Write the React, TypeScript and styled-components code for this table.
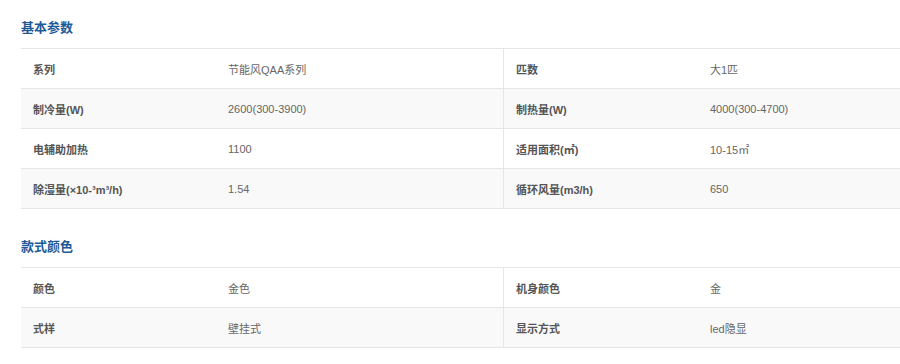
import React from 'react';
import styled, { createGlobalStyle } from 'styled-components';

const GlobalStyle = createGlobalStyle`
  body {
    margin: 0;
    background: #ffffff;
    font-family: Arial, "Liberation Sans", "Noto Sans CJK SC", sans-serif;
  }
`;

const Page = styled.div`
  padding: 8px 0 0 21px;
  display: flex;
  flex-direction: column;
  gap: 18px;
`;

const Section = styled.section`
  display: flex;
  flex-direction: column;
`;

const Title = styled.h3`
  margin: 0;
  height: 40px;
  line-height: 40px;
  font-size: 13px;
  font-weight: bold;
  color: #1d5a98;
`;

const Table = styled.div`
  border-top: 1px solid #e6e6e6;
`;

const Row = styled.div<{ $shaded: boolean }>`
  display: grid;
  grid-template-columns: 195px 287px 195px 1fr;
  height: 39px;
  align-items: center;
  background: ${p => (p.$shaded ? '#f9f9f9' : '#ffffff')};
  border-bottom: 1px solid #e6e6e6;
`;

const Label = styled.div<{ $divider?: boolean }>`
  height: 100%;
  display: flex;
  align-items: center;
  padding-left: 12px;
  font-size: 11px;
  font-weight: bold;
  color: #555555;
  border-left: ${p => (p.$divider ? '1px solid #e6e6e6' : 'none')};
  box-sizing: border-box;
`;

const Value = styled.div`
  padding-left: 12px;
  font-size: 11px;
  color: #666666;
`;

type Item = [string, React.ReactNode, string, React.ReactNode];

const basic: Item[] = [
  ['系列', '节能风QAA系列', '匹数', '大1匹'],
  ['制冷量(W)', '2600(300-3900)', '制热量(W)', '4000(300-4700)'],
  ['电辅助加热', '1100', '适用面积(㎡)', '10-15㎡'],
  ['除湿量(×10-³m³/h)', '1.54', '循环风量(m3/h)', '650'],
];

const style: Item[] = [
  ['颜色', '金色', '机身颜色', '金'],
  ['式样', '壁挂式', '显示方式', 'led隐显'],
];

function SpecTable({ title, items }: { title: string; items: Item[] }) {
  return (
    <Section>
      <Title>{title}</Title>
      <Table>
        {items.map((it, i) => (
          <Row key={i} $shaded={i % 2 === 1}>
            <Label>{it[0]}</Label>
            <Value>{it[1]}</Value>
            <Label $divider>{it[2]}</Label>
            <Value>{it[3]}</Value>
          </Row>
        ))}
      </Table>
    </Section>
  );
}

export default function App() {
  return (
    <>
      <GlobalStyle />
      <Page>
        <SpecTable title="基本参数" items={basic} />
        <SpecTable title="款式颜色" items={style} />
      </Page>
    </>
  );
}
